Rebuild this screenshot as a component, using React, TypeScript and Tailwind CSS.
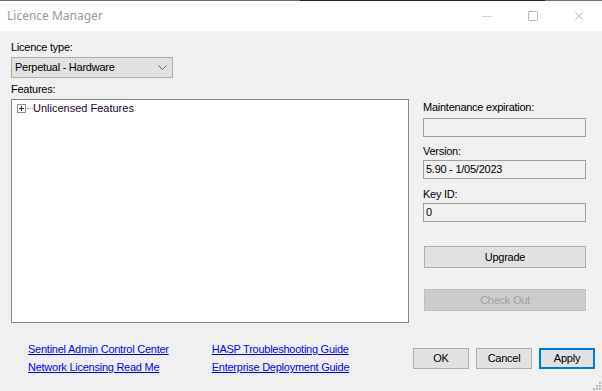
import { Square, X } from 'lucide-react'

const FONT = { fontFamily: '"Liberation Sans", Arial, sans-serif' }

function Field({ label, value, top, gap }: { label: string; value?: string; top: string; gap: string }) {
  return (
    <div className={top}>
      <div className="h-[13px] leading-[13px] text-[11px] tracking-[-0.25px] text-black">{label}</div>
      <div className={`${gap} h-[19px] border border-[#a0a0a0] bg-[#f0f0f0] px-[2px] text-[11px] tracking-[-0.25px] leading-[17px] text-black`}>
        {value}
      </div>
    </div>
  )
}

function Btn({ label, w, primary }: { label: string; w: string; primary?: boolean }) {
  return (
    <button
      className={`${w} h-[21px] bg-[#e1e1e1] text-[11px] tracking-[-0.25px] leading-[13px] text-black ${
        primary ? 'border-2 border-[#0078d7]' : 'border border-[#adadad]'
      }`}
    >
      {label}
    </button>
  )
}

export default function App() {
  return (
    <div className="w-[602px] h-[391px] bg-[#f0f0f0] flex flex-col overflow-hidden relative" style={FONT}>
      <div className="h-px flex">
        <div className="w-[300px] bg-[#5f6a70]" />
        <div className="w-[245px] bg-[#242424]" />
        <div className="flex-1 bg-[#64747f]" />
      </div>

      {/* title bar */}
      <div className="h-[30px] bg-white flex items-center">
        <span className="pl-[7px] text-[12px] text-[#9a9a9a]" style={{ fontFamily: '"Noto Sans", "Open Sans", sans-serif' }}>
          Licence Manager
        </span>
        <div className="ml-auto flex items-center h-full">
          <div className="w-[46px] h-full flex items-center justify-center">
            <div className="w-[10px] h-px bg-[#d4d4d4]" />
          </div>
          <div className="w-[46px] h-full flex items-center justify-center">
            <Square className="w-[12px] h-[12px] text-[#8a8a8a]" strokeWidth={1.2} absoluteStrokeWidth />
          </div>
          <div className="w-[46px] h-full flex items-center justify-center">
            <X className="w-[14px] h-[14px] text-[#8a8a8a]" strokeWidth={1} absoluteStrokeWidth />
          </div>
        </div>
      </div>

      <div className="flex">
        {/* left column */}
        <div className="ml-[11px] w-[398px] text-[11px] tracking-[-0.25px]">
          <div className="mt-[10px] h-[13px] leading-[13px] text-black">Licence type:</div>
          <div className="mt-[3px] w-[162px] h-[21px] bg-[#e1e1e1] border border-[#adadad] flex items-center pl-[3px] pr-[5px]">
            <span className="text-black flex-1">Perpetual - Hardware</span>
            <svg width="9" height="5" viewBox="0 0 9 5">
              <path d="M0.5 0.5 L4.5 4.5 L8.5 0.5" fill="none" stroke="#606060" strokeWidth="1" />
            </svg>
          </div>
          <div className="mt-[5px] h-[13px] leading-[13px] text-black">Features:</div>
          <div className="mt-[3px] h-[224px] bg-white border border-[#828790] pt-[2px] pl-[5px]">
            <div className="flex items-center h-[13px]">
              <div className="w-[9px] h-[9px] border border-[#919191] flex items-center justify-center relative">
                <div className="absolute w-[5px] h-px bg-[#333]" />
                <div className="absolute w-px h-[5px] bg-[#333]" />
              </div>
              <div className="w-[6px] ml-px border-t border-dotted border-[#a0a0a0]" />
              <span className="text-[11px] tracking-normal text-[#1a0530]">Unlicensed Features</span>
            </div>
          </div>
        </div>

        {/* right column */}
        <div className="ml-[14px] w-[163px]">
          <Field top="mt-[70px]" gap="mt-[4px]" label="Maintenance expiration:" />
          <Field top="mt-[8px]" gap="mt-[2px]" label="Version:" value="5.90 - 1/05/2023" />
          <Field top="mt-[9px]" gap="mt-[2px]" label="Key ID:" value="0" />
          <button className="mt-[24px] ml-px w-[162px] h-[22px] bg-[#e1e1e1] border border-[#adadad] text-[11px] tracking-[-0.25px] text-black">
            Upgrade
          </button>
          <button className="mt-[21px] ml-px w-[162px] h-[22px] bg-[#cccccc] border border-[#bfbfbf] text-[11px] tracking-[-0.25px] text-[#a0a0a0]">
            Check Out
          </button>
        </div>
      </div>

      {/* bottom row */}
      <div className="flex mt-[17px]">
        <div className="ml-[28px] flex gap-[43px] text-[11px] tracking-[-0.25px] leading-[18px] text-[#0000ff] underline">
          <div className="flex flex-col">
            <a>Sentinel Admin Control Center</a>
            <a>Network Licensing Read Me</a>
          </div>
          <div className="flex flex-col">
            <a>HASP Troubleshooting Guide</a>
            <a>Enterprise Deployment Guide</a>
          </div>
        </div>
        <div className="ml-auto mr-[7px] mt-[8px] flex gap-[7px]">
          <Btn label="OK" w="w-[56px]" />
          <Btn label="Cancel" w="w-[56px]" />
          <Btn label="Apply" w="w-[56px]" primary />
        </div>
      </div>

      {/* resize grip */}
      <svg className="absolute right-[1px] bottom-[1px]" width="9" height="9" viewBox="0 0 9 9">
        {[
          [7, 1],
          [4, 4], [7, 4],
          [1, 7], [4, 7], [7, 7],
        ].map(([x, y]) => (
          <rect key={`${x}-${y}`} x={x} y={y} width="2" height="2" fill="#b8b8b8" />
        ))}
      </svg>
    </div>
  )
}
